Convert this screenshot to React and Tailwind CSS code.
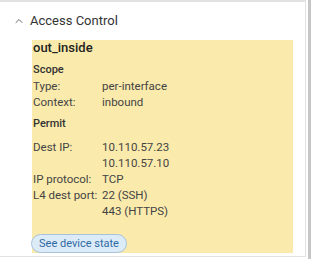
import { ChevronUp } from 'lucide-react'

const SCOPE = [
  { label: 'Type:', values: ['per-interface'] },
  { label: 'Context:', values: ['inbound'] },
]

const PERMIT = [
  { label: 'Dest IP:', values: ['10.110.57.23', '10.110.57.10'] },
  { label: 'IP protocol:', values: ['TCP'] },
  { label: 'L4 dest port:', values: ['22 (SSH)', '443 (HTTPS)'] },
]

function Rows({ rows }) {
  return (
    <div>
      {rows.map((r) => (
        <div key={r.label} className="flex">
          <div className="w-[69px] shrink-0">{r.label}</div>
          <div>
            {r.values.map((v) => (
              <div key={v}>{v}</div>
            ))}
          </div>
        </div>
      ))}
    </div>
  )
}

export default function App() {
  return (
    <div className="flex h-[259px] w-[311px] bg-white font-['Roboto',sans-serif]">
      <div className="h-[257px] flex-1 border-t-2 border-r border-b border-[#e2e2e2]">
        <div className="flex h-[38px] items-center">
          <ChevronUp className="ml-[13px] mr-[5px] text-[#666]" size={12} strokeWidth={2} />
          <span className="text-[13px] leading-[16px] text-[#333]">Access Control</span>
        </div>
        <div className="ml-[32px] mr-[12px] bg-[#faeaab] pl-[1px] pt-[1px] text-[11.5px] leading-[16px] text-[#444]">
          <div className="text-[13px] leading-[14px] font-medium text-[#222]">out_inside</div>
          <div className="mt-[8px] text-[11px] leading-[14px] font-medium text-[#333]">Scope</div>
          <div className="mt-[1px]">
            <Rows rows={SCOPE} />
          </div>
          <div className="mt-[7px] text-[11px] leading-[14px] font-medium text-[#333]">Permit</div>
          <div className="mt-[8px]">
            <Rows rows={PERMIT} />
          </div>
          <div className="-mb-[1px] -ml-[2px] pt-[15px]">
            <button className="h-[19px] w-[96px] rounded-full border border-[#a8c2dc] bg-[#dcebf8] text-[11px] leading-[17px] text-[#2e6aa3]">
              See device state
            </button>
          </div>
        </div>
      </div>
      <div className="ml-[2px] w-[3px] bg-[#c6c6c6]" />
    </div>
  )
}
